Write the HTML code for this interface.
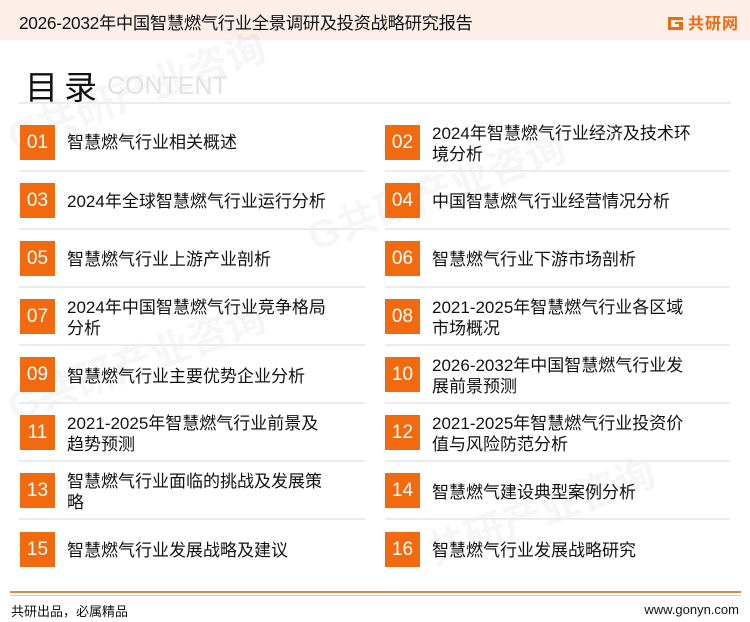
<!DOCTYPE html>
<html><head><meta charset="utf-8"><style>
*{margin:0;padding:0;box-sizing:border-box}
body{width:750px;height:622px;background:#fff;position:relative;overflow:hidden;font-family:"Liberation Sans","Noto Sans CJK SC",sans-serif;color:#111}
.hdr{position:absolute;left:0;top:0;width:750px;height:40px;background:#fcefe7}
.title{position:absolute;left:19px;top:9px;font-size:17.3px;color:#111;letter-spacing:-0.3px}
.logo{position:absolute;left:667px;top:10px;display:flex;align-items:center}
.logo span{font-size:16px;font-weight:bold;color:#f06a10;margin-left:4px;letter-spacing:1px}
.ml{position:absolute;left:25px;top:61px;font-size:33px;color:#111;letter-spacing:6px}
.ct{position:absolute;left:107px;top:72px;font-size:25px;color:#e2e2e2;font-family:"Liberation Sans",sans-serif}
.hl{position:absolute;height:2px;background:#ececec}
.box{position:absolute;width:35px;height:35px;background:#f26a0f;color:#fff;font-size:19px;text-align:center;line-height:35px}
.txt{position:absolute;font-size:17px;line-height:21px;color:#111}
.wm{position:absolute;color:#000;opacity:0.03;font-size:40px;font-weight:bold;transform:rotate(-20deg);white-space:nowrap}
</style></head><body>
<div class="hdr"></div>
<div class="title">2026-2032年中国智慧燃气行业全景调研及投资战略研究报告</div>
<div class="logo"><svg width="17" height="17" viewBox="0 0 17 17"><path d="M1 3h15v3H4v7h8v-3H8V8h8v8H1z" fill="#f06a10"/></svg><span>共研网</span></div>
<div class="wm" style="left:0;top:60px">G共研产业咨询</div>
<div class="wm" style="left:300px;top:160px">G共研产业咨询</div>
<div class="wm" style="left:0;top:330px">G共研产业咨询</div>
<div class="wm" style="left:420px;top:480px">共研产业咨询</div>
<div class="ml">目录</div>
<div class="ct">CONTENT</div>
<div class="hl" style="left:19px;top:102px;width:712px"></div>

<div class="box" style="left:20px;top:125px">01</div><div class="txt" style="left:67px;top:132px">智慧燃气行业相关概述</div>
<div class="box" style="left:385px;top:125px">02</div><div class="txt" style="left:432px;top:123px">2024年智慧燃气行业经济及技术环<br>境分析</div>
<div class="hl" style="left:19px;top:170px;width:346px"></div><div class="hl" style="left:385px;top:170px;width:345px"></div>

<div class="box" style="left:20px;top:183px">03</div><div class="txt" style="left:67px;top:191px">2024年全球智慧燃气行业运行分析</div>
<div class="box" style="left:385px;top:183px">04</div><div class="txt" style="left:432px;top:191px">中国智慧燃气行业经营情况分析</div>
<div class="hl" style="left:19px;top:228px;width:346px"></div><div class="hl" style="left:385px;top:228px;width:345px"></div>

<div class="box" style="left:20px;top:241px">05</div><div class="txt" style="left:67px;top:249px">智慧燃气行业上游产业剖析</div>
<div class="box" style="left:385px;top:241px">06</div><div class="txt" style="left:432px;top:249px">智慧燃气行业下游市场剖析</div>
<div class="hl" style="left:19px;top:286px;width:346px"></div><div class="hl" style="left:385px;top:286px;width:345px"></div>

<div class="box" style="left:20px;top:299px">07</div><div class="txt" style="left:67px;top:297px">2024年中国智慧燃气行业竞争格局<br>分析</div>
<div class="box" style="left:385px;top:299px">08</div><div class="txt" style="left:432px;top:297px">2021-2025年智慧燃气行业各区域<br>市场概况</div>
<div class="hl" style="left:19px;top:344px;width:346px"></div><div class="hl" style="left:385px;top:344px;width:345px"></div>

<div class="box" style="left:20px;top:357px">09</div><div class="txt" style="left:67px;top:366px">智慧燃气行业主要优势企业分析</div>
<div class="box" style="left:385px;top:357px">10</div><div class="txt" style="left:432px;top:355px">2026-2032年中国智慧燃气行业发<br>展前景预测</div>
<div class="hl" style="left:19px;top:402px;width:346px"></div><div class="hl" style="left:385px;top:402px;width:345px"></div>

<div class="box" style="left:20px;top:415px">11</div><div class="txt" style="left:67px;top:413px">2021-2025年智慧燃气行业前景及<br>趋势预测</div>
<div class="box" style="left:385px;top:415px">12</div><div class="txt" style="left:432px;top:413px">2021-2025年智慧燃气行业投资价<br>值与风险防范分析</div>
<div class="hl" style="left:19px;top:460px;width:346px"></div><div class="hl" style="left:385px;top:460px;width:345px"></div>

<div class="box" style="left:20px;top:473px">13</div><div class="txt" style="left:67px;top:471px">智慧燃气行业面临的挑战及发展策<br>略</div>
<div class="box" style="left:385px;top:473px">14</div><div class="txt" style="left:432px;top:482px">智慧燃气建设典型案例分析</div>
<div class="hl" style="left:19px;top:518px;width:346px"></div><div class="hl" style="left:385px;top:518px;width:345px"></div>

<div class="box" style="left:20px;top:532px">15</div><div class="txt" style="left:67px;top:540px">智慧燃气行业发展战略及建议</div>
<div class="box" style="left:385px;top:532px">16</div><div class="txt" style="left:432px;top:540px">智慧燃气行业发展战略研究</div>

<div style="position:absolute;left:10px;top:591px;width:731px;height:2px;background:#d9874a"></div>
<div style="position:absolute;left:10px;top:595px;width:731px;height:1px;background:#f1c9a8"></div>
<div style="position:absolute;left:11px;top:601px;font-size:13px">共研出品，必属精品</div>
<div style="position:absolute;right:11px;top:602px;font-size:13px">www.gonyn.com</div>
</body></html>
